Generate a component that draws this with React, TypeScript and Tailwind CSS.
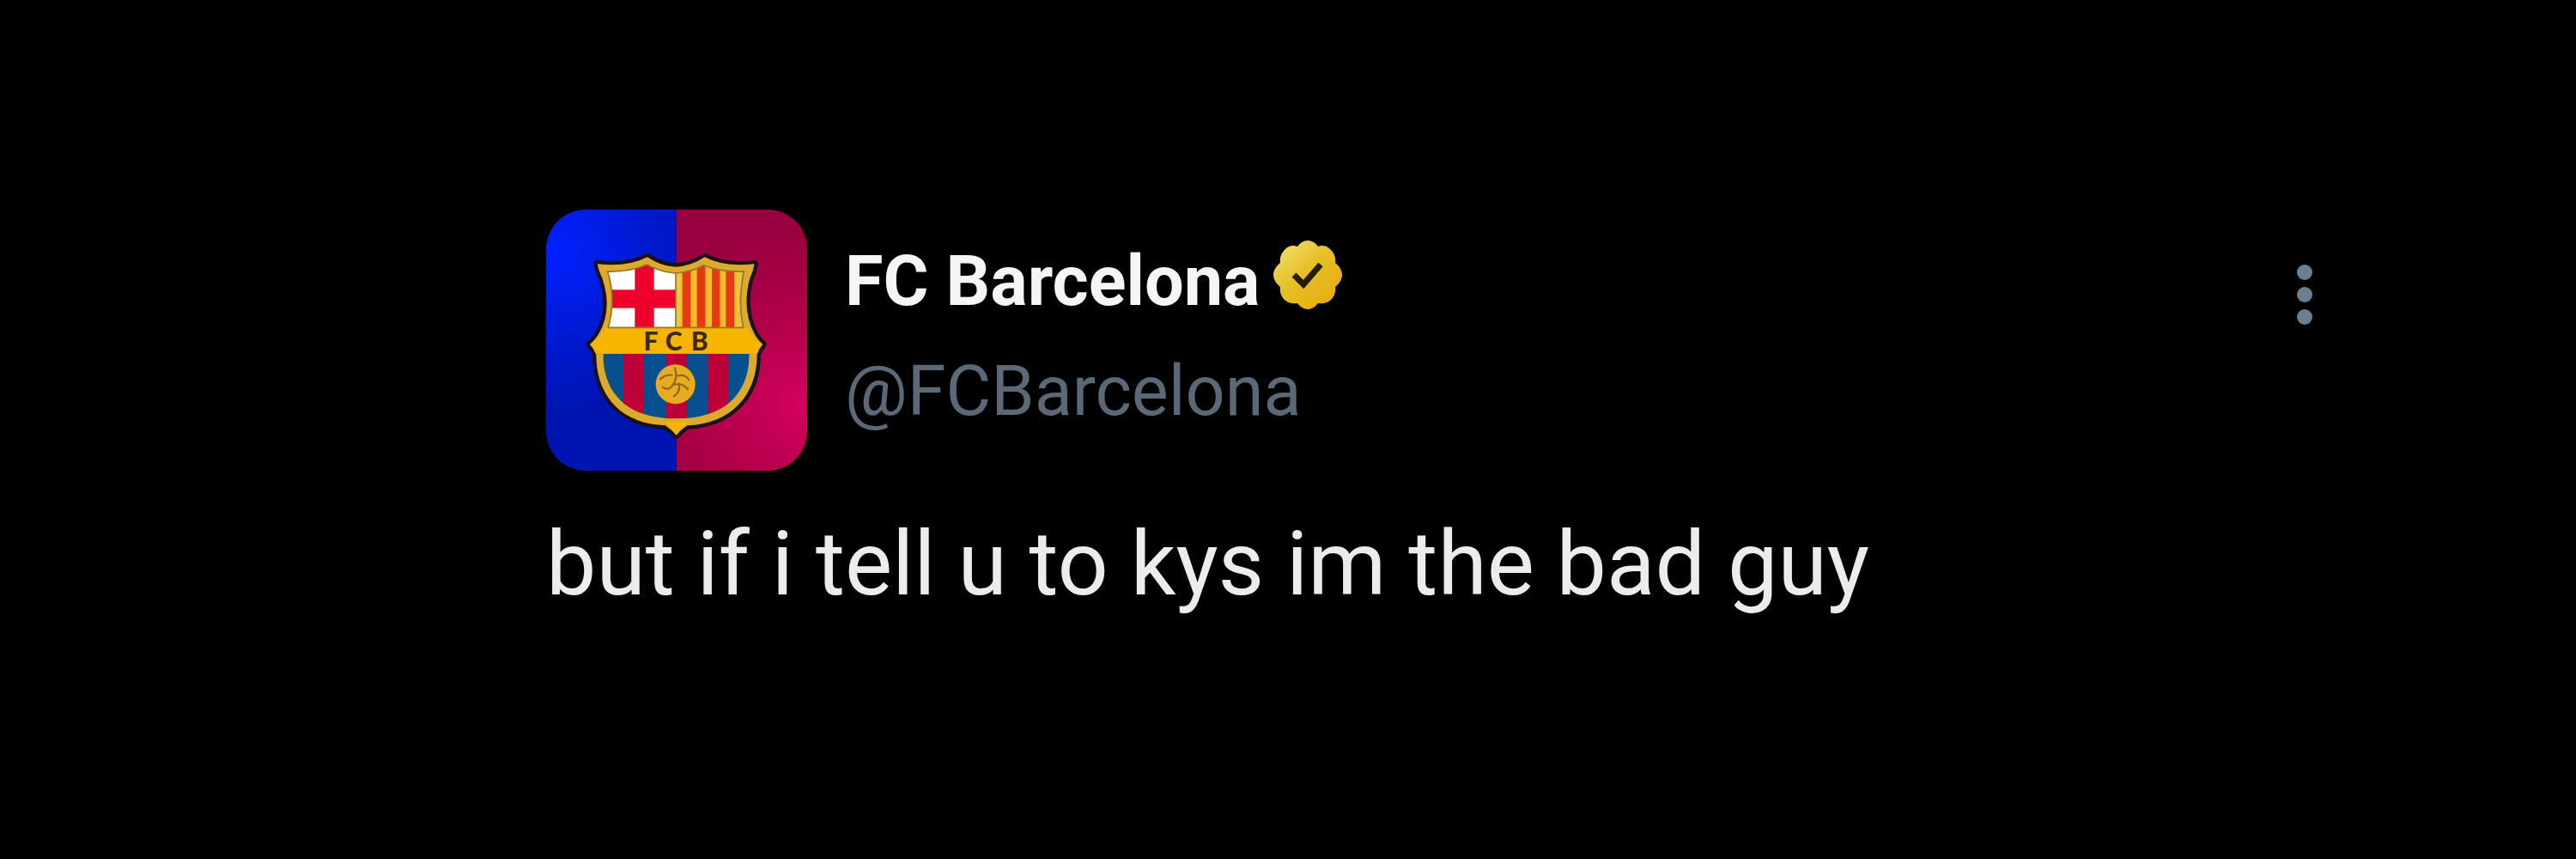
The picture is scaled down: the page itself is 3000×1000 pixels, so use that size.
import React from 'react';

const Crest: React.FC = () => (
  <svg viewBox="47 38 912 912" className="w-full h-full" role="img" aria-label="FC Barcelona crest">
    <defs>
      <radialGradient id="blue" gradientUnits="userSpaceOnUse" cx="85" cy="190" r="540">
        <stop offset="0" stopColor="#0220ff" />
        <stop offset="0.45" stopColor="#001bda" />
        <stop offset="1" stopColor="#0014b2" />
      </radialGradient>
      <radialGradient id="red" gradientUnits="userSpaceOnUse" cx="930" cy="720" r="620">
        <stop offset="0" stopColor="#d4005e" />
        <stop offset="0.5" stopColor="#b00049" />
        <stop offset="1" stopColor="#99003f" />
      </radialGradient>
      <clipPath id="top">
        <path d="M262 254 Q340 256 400 230 Q445 256 500 260 Q555 256 598 232 Q650 256 738 254 Q716 360 736 450 H264 Q292 350 262 254 Z" />
      </clipPath>
      <clipPath id="bottom">
        <path d="M246 541 H757 C757 690 660 768 501 768 C342 768 246 690 246 541 Z" />
      </clipPath>
    </defs>

    <rect x="47" y="38" width="456" height="912" fill="url(#blue)" />
    <rect x="503" y="38" width="456" height="912" fill="url(#red)" />

    <path
      d="M226 228 Q330 240 401 204 Q450 236 501 238 Q552 236 601 204 Q670 240 775 228 Q770 256 758 280 Q730 390 776 474 Q784 490 804 509 Q790 524 784 544 C784 690 690 786 540 792 Q516 808 502 826 Q486 808 464 792 C310 786 222 690 222 544 Q214 524 200 509 Q220 490 230 474 Q280 390 244 280 Q232 256 226 228 Z"
      fill="#dcaa2c"
      stroke="#1c1216"
      strokeWidth="26"
      strokeLinejoin="round"
      paintOrder="stroke"
    />
    <path d="M256 450 H748 Q774 490 802 509 Q788 520 784 540 H220 Q216 520 202 509 Q230 490 256 450 Z" fill="#f7b500" />
    <path d="M455 780 H549 Q520 796 502 824 Q484 796 455 780 Z" fill="#f7b500" />

    <g clipPath="url(#top)">
      <rect x="250" y="220" width="250" height="232" fill="#fff" />
      <rect x="250" y="318" width="250" height="64" fill="#ee002b" />
      <rect x="357" y="220" width="67" height="232" fill="#ee002b" />
      <rect x="500" y="220" width="250" height="232" fill="#fbb82a" />
      <rect x="500" y="220" width="16" height="232" fill="#e8c848" />
      <rect x="712" y="220" width="30" height="232" fill="#e8c53f" />
      <rect x="523" y="220" width="29" height="232" fill="#e33a12" />
      <rect x="574" y="220" width="29" height="232" fill="#e33a12" />
      <rect x="626" y="220" width="28" height="232" fill="#e33a12" />
      <rect x="675" y="220" width="29" height="232" fill="#e33a12" />
    </g>
    <path
      d="M262 254 Q340 256 400 230 Q445 256 500 260 Q555 256 598 232 Q650 256 738 254 Q716 360 736 450 H264 Q292 350 262 254 Z M500 260 V450"
      fill="none"
      stroke="#96752a"
      strokeWidth="5"
    />

    <g clipPath="url(#bottom)">
      <rect x="240" y="541" width="522" height="230" fill="#065090" />
      <rect x="317" y="541" width="70" height="230" fill="#bd0038" />
      <rect x="465" y="541" width="72" height="230" fill="#bd0038" />
      <rect x="612" y="541" width="72" height="230" fill="#bd0038" />
    </g>

    <g fill="#3c2a12" fontFamily="Lato, sans-serif" fontWeight="900" fontSize="90" textAnchor="middle">
      <text x="413" y="529">F</text>
      <text x="493" y="529">C</text>
      <text x="583" y="529">B</text>
    </g>

    <circle cx="499" cy="648" r="69" fill="#e9ac20" />
    <g fill="none" stroke="#94691c" strokeWidth="7" strokeLinecap="round">
      <path d="M497 592 Q508 625 490 650 Q478 672 454 658" />
      <path d="M486 616 Q462 614 446 630" />
      <path d="M490 650 Q524 640 542 666" />
      <path d="M512 646 Q516 676 494 690" />
      <path d="M508 618 Q532 612 546 632" />
    </g>
  </svg>
);

const VerifiedBadge: React.FC = () => (
  <svg viewBox="0 0 80 80" className="w-20 h-20 shrink-0" role="img" aria-label="Verified">
    <defs>
      <linearGradient id="gold" x1="0.1" y1="0.1" x2="0.8" y2="0.9">
        <stop offset="0" stopColor="#f0dc62" />
        <stop offset="0.45" stopColor="#e8c02a" />
        <stop offset="1" stopColor="#e6ae10" />
      </linearGradient>
    </defs>
    <path
      d="M40 0 C45 0 49 3 52 7 C57 5 63 6 67 11 C71 15 73 20 72 26 C77 30 80 35 80 40 C80 45 77 50 72 54 C73 60 71 65 67 69 C63 73 57 74 52 73 C49 77 45 80 40 80 C35 80 31 77 28 73 C23 74 17 73 13 69 C9 65 7 60 8 54 C3 50 0 45 0 40 C0 35 3 30 8 26 C7 20 9 15 13 11 C17 6 23 5 28 7 C31 3 35 0 40 0 Z"
      fill="url(#gold)"
    />
    <path d="M24 40 L35 51 L55 28" fill="none" stroke="#251c06" strokeWidth="7" />
  </svg>
);

const App: React.FC = () => {
  return (
    <main className="min-h-screen bg-black pt-[244px] pl-[21.2%] pr-[10%] font-['Roboto',sans-serif]">
      <article>
        <header className="flex items-start">
          <div className="w-[304px] h-[304px] shrink-0 rounded-[46px] overflow-hidden">
            <Crest />
          </div>

          <div className="ml-11 pt-9 grow">
            <div className="flex items-start gap-4">
              <h1 className="text-[81px] leading-[96px] font-bold text-[#f5f5f5]">FC Barcelona</h1>
              <VerifiedBadge />
            </div>
            <p className="mt-4 text-[81px] leading-[128px] text-[#5b6977]">@FCBarcelona</p>
          </div>

          <button type="button" aria-label="More options" className="mt-16 w-8 shrink-0 flex flex-col items-center gap-2">
            <span className="size-[18px] rounded-full bg-[#6c7f8f]" />
            <span className="size-[18px] rounded-full bg-[#6c7f8f]" />
            <span className="size-[18px] rounded-full bg-[#6c7f8f]" />
          </button>
        </header>

        <p className="mt-11 text-[104px] leading-[130px] text-[#ececec]">but if i tell u to kys im the bad guy</p>
      </article>
    </main>
  );
};

export default App;
